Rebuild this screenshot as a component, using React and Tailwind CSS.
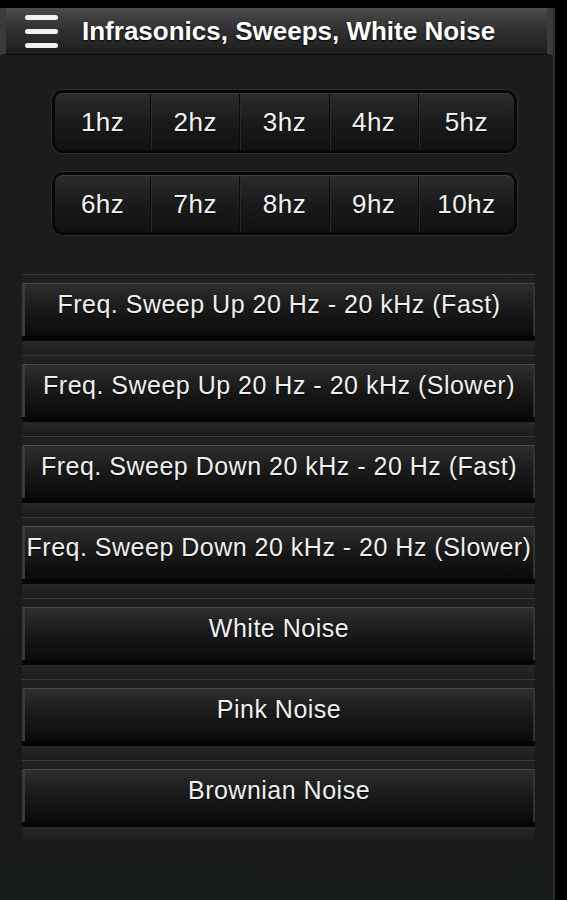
import React from 'react'

const hzRows = [
  ['1hz', '2hz', '3hz', '4hz', '5hz'],
  ['6hz', '7hz', '8hz', '9hz', '10hz']
]

const sounds = [
  'Freq. Sweep Up 20 Hz - 20 kHz (Fast)',
  'Freq. Sweep Up 20 Hz - 20 kHz (Slower)',
  'Freq. Sweep Down 20 kHz - 20 Hz (Fast)',
  'Freq. Sweep Down 20 kHz - 20 Hz (Slower)',
  'White Noise',
  'Pink Noise',
  'Brownian Noise'
]

const font = { fontFamily: '"Liberation Sans", Arial, sans-serif' }

function HzGroup({ items }) {
  return (
    <div className="rounded-[11px] bg-[#080808] p-[3px] shadow-[0_0_0_1px_#2c2c2c]">
      <div className="flex h-[57px] rounded-[8px] overflow-hidden border-t border-[#3c3c3c] bg-gradient-to-b from-[#2b2b2b] via-[#1b1b1b] to-[#111111]">
        {items.map((label, i) => (
          <button
            key={label}
            className={`flex items-center justify-center text-[26px] tracking-[0.5px] text-[#f2f2f2] [text-shadow:0_1px_1px_#000] ${
              i === 0 || i === 4 ? 'flex-[1.08]' : 'flex-1'
            } ${i > 0 ? 'border-l border-[#0c0c0c] shadow-[inset_1px_0_0_#2a2a2a]' : ''}`}
          >
            {label}
          </button>
        ))}
      </div>
    </div>
  )
}

function SoundItem({ label }) {
  return (
    <div className="border-t border-[#3a3a3a] pt-[8px] bg-gradient-to-b from-[#202020] to-[#161616]">
      <button className="w-full h-[53px] pb-[10px] flex items-center justify-center border-t border-[#4a4a4a] border-l-[3px] border-l-[#3a3a3a] border-r-[2px] border-r-[#333] bg-gradient-to-b from-[#2e2e2e] via-[#191919] to-[#0a0a0a] text-[25px] tracking-[0.5px] whitespace-nowrap text-[#f0f0f0] [text-shadow:0_1px_1px_#000]">
        {label}
      </button>
      <div className="h-[5px] bg-[#050505]" />
      <div className="h-[14px] bg-gradient-to-b from-[#282828] to-[#1c1c1c]" />
    </div>
  )
}

export default function App() {
  return (
    <div className="min-h-screen w-[567px] h-[900px] bg-black flex flex-col overflow-hidden" style={font}>
      <div className="h-[8px] bg-black shrink-0" />
      <div className="flex flex-1 min-h-0">
        <div className="w-[553px] flex flex-col bg-gradient-to-b from-[#1d1d1d] via-[#1b1b1b] to-[#171a1a]">
          {/* Header */}
          <header className="h-[47px] shrink-0 flex items-center border-x-[6px] border-x-[#3b3b3b] border-b border-b-[#0b0b0b] bg-gradient-to-b from-[#4c4c4c] via-[#2f2f2f] to-[#1e1e1e]">
            <div className="ml-[19px] flex flex-col gap-[9px]">
              <span className="block w-[33px] h-[5px] rounded-full bg-[#f2f2f2]" />
              <span className="block w-[33px] h-[5px] rounded-full bg-[#f2f2f2]" />
              <span className="block w-[33px] h-[5px] rounded-full bg-[#f2f2f2]" />
            </div>
            <h1 className="ml-[24px] text-[26px] font-bold text-white whitespace-nowrap [text-shadow:0_1px_2px_#000]">
              Infrasonics, Sweeps, White Noise
            </h1>
          </header>

          {/* Hz buttons */}
          <div className="mt-[35px] ml-[52px] w-[465px] flex flex-col gap-[19px]">
            {hzRows.map((row, i) => (
              <HzGroup key={i} items={row} />
            ))}
          </div>

          {/* Sweeps and noise */}
          <div className="mt-[39px] ml-[22px] w-[513px] flex flex-col">
            {sounds.map((s) => (
              <SoundItem key={s} label={s} />
            ))}
          </div>
        </div>
        <div className="w-[2px] bg-[#2e2e2e]" />
      </div>
    </div>
  )
}
